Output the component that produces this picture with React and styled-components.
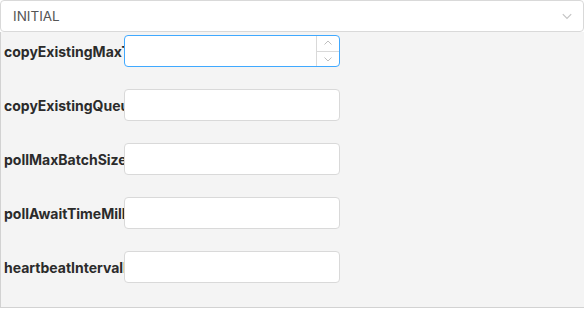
import React from 'react';
import styled, { createGlobalStyle } from 'styled-components';

const GlobalStyle = createGlobalStyle`
  html, body {
    margin: 0;
    padding: 0;
    background: #ffffff;
    font-family: Inter, "Noto Sans", sans-serif;
  }
`;

const fields = [
  { name: 'copyExistingMaxThreads', focused: true },
  { name: 'copyExistingQueueSize' },
  { name: 'pollMaxBatchSize' },
  { name: 'pollAwaitTimeMillis' },
  { name: 'heartbeatIntervalMillis' },
];

const Chevron = ({ up, size = 10, color = '#bfbfbf' }) => (
  <svg width={size} height={size} viewBox="0 0 10 10" fill="none">
    <path
      d={up ? 'M1.5 6.5 L5 3 L8.5 6.5' : 'M1.5 3.5 L5 7 L8.5 3.5'}
      stroke={color}
      strokeWidth="1"
    />
  </svg>
);

const App = () => (
  <>
    <GlobalStyle />
    <Wrapper>
      <Select>
        <SelectValue>INITIAL</SelectValue>
        <Chevron size={12} color="#c4c4c4" />
      </Select>
      <Panel>
        {fields.map((f) => (
          <Row key={f.name}>
            <Label>{f.name}</Label>
            <NumberInput $focused={f.focused}>
              <Field />
              {f.focused && (
                <Handlers>
                  <Handler>
                    <Chevron up />
                  </Handler>
                  <Handler>
                    <Chevron />
                  </Handler>
                </Handlers>
              )}
            </NumberInput>
          </Row>
        ))}
      </Panel>
    </Wrapper>
  </>
);

export default App;

const Wrapper = styled.div`
  width: 584px;
  height: 309px;
  display: flex;
  flex-direction: column;
`;

const Select = styled.div`
  height: 32px;
  box-sizing: border-box;
  border: 1px solid #d9d9d9;
  border-radius: 4px;
  background: #fff;
  display: flex;
  align-items: center;
  justify-content: space-between;
  padding: 0 10px 0 12px;
`;

const SelectValue = styled.span`
  font-size: 13.5px;
  color: #555555;
`;

const Panel = styled.div`
  height: 276px;
  box-sizing: border-box;
  background: #f4f4f4;
  border-left: 1px solid #d2d2d2;
  border-bottom: 1px solid #d2d2d2;
  padding: 3px 0 0 3px;
  display: flex;
  flex-direction: column;
  gap: 22px;
`;

const Row = styled.div`
  display: flex;
  align-items: center;
  height: 32px;
`;

const Label = styled.div`
  width: 120px;
  overflow: hidden;
  white-space: nowrap;
  font-size: 14px;
  font-weight: 700;
  color: #2b2b2b;
`;

const NumberInput = styled.div`
  width: 216px;
  height: 32px;
  box-sizing: border-box;
  border: 1px solid ${(p) => (p.$focused ? '#40a9ff' : '#d9d9d9')};
  border-radius: 4px;
  background: #fff;
  display: flex;
  overflow: hidden;
`;

const Field = styled.div`
  flex: 1;
`;

const Handlers = styled.div`
  width: 22px;
  border-left: 1px solid #d9d9d9;
  display: flex;
  flex-direction: column;
`;

const Handler = styled.div`
  flex: 1;
  display: flex;
  align-items: center;
  justify-content: center;
  & + & {
    border-top: 1px solid #d9d9d9;
  }
`;
